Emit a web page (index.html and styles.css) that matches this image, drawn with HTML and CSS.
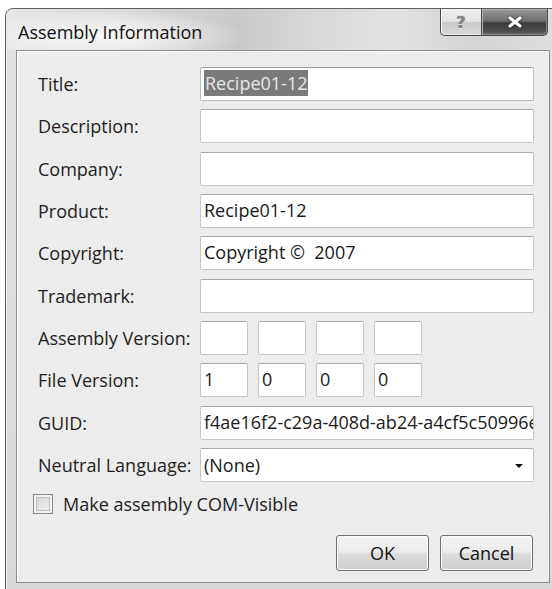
FILE: index.html
```html
<!DOCTYPE html>
<html lang="en">
<head>
<meta charset="utf-8">
<title>Assembly Information</title>
<link rel="stylesheet" href="styles.css">
</head>
<body>
<div class="window">
  <div class="titlebar">
    <span class="caption">Assembly Information</span>
    <div class="caption-buttons">
      <button class="cap-btn help" type="button">?</button>
      <button class="cap-btn close" type="button" aria-label="Close">
        <svg width="16" height="12" viewBox="0 0 16 12">
          <path d="M3 2 L13 10 M13 2 L3 10" stroke="#fff" stroke-width="3" stroke-linecap="round"/>
        </svg>
      </button>
    </div>
  </div>

  <div class="client">
    <div class="form">
      <label class="lbl">Title:</label>
      <div class="field first"><span class="sel">Recipe01-12</span></div>

      <label class="lbl">Description:</label>
      <div class="field"></div>

      <label class="lbl">Company:</label>
      <div class="field"></div>

      <label class="lbl">Product:</label>
      <div class="field">Recipe01-12</div>

      <label class="lbl">Copyright:</label>
      <div class="field">Copyright ©&nbsp; 2007</div>

      <label class="lbl">Trademark:</label>
      <div class="field"></div>

      <label class="lbl">Assembly Version:</label>
      <div class="version">
        <div class="field"></div><div class="field"></div><div class="field"></div><div class="field"></div>
      </div>

      <label class="lbl">File Version:</label>
      <div class="version">
        <div class="field">1</div><div class="field">0</div><div class="field">0</div><div class="field">0</div>
      </div>

      <label class="lbl">GUID:</label>
      <div class="field clip">f4ae16f2-c29a-408d-ab24-a4cf5c50996e</div>

      <label class="lbl">Neutral Language:</label>
      <div class="field combo"><span>(None)</span><span class="arrow"></span></div>
    </div>

    <label class="check"><span class="box"></span>Make assembly COM-Visible</label>

    <div class="actions">
      <button class="btn" type="button">OK</button>
      <button class="btn" type="button">Cancel</button>
    </div>
  </div>
</div>
</body>
</html>
```

FILE: styles.css
```css
html, body {
  margin: 0;
  padding: 0;
  background: #ffffff;
  overflow: hidden;
  width: 552px;
  height: 589px;
}

body {
  font-family: "Open Sans", "Noto Sans", sans-serif;
  color: #1e1e1e;
}

/* Window frame */
.window {
  margin: 8px 0 0 5px;
  width: 555px;
  height: 600px;
  border: 1px solid #5e5e5e;
  border-radius: 8px 8px 0 0;
  background: linear-gradient(180deg, #e2e2e2 0%, #d8d8d8 100%);
  box-sizing: border-box;
  box-shadow: inset 1px 1px 0 #f4f4f4;
}

.titlebar {
  height: 41px;
  display: flex;
  justify-content: space-between;
  align-items: flex-start;
  padding: 0 11px 0 12px;
  border-radius: 8px 8px 0 0;
  background:
    radial-gradient(ellipse 140px 26px at 100px 27px, rgba(250,250,250,0.95), rgba(250,250,250,0) 100%),
    linear-gradient(90deg, #e6e6e6 0%, #dcdcdc 20%, #c9c9c9 42%, #d8d8d8 55%, #e2e2e2 70%, #d4d4d4 85%, #dedede 100%);
}

.caption {
  font-size: 18px;
  color: #111;
  line-height: 1;
  margin-top: 14px;
}

.caption-buttons {
  display: flex;
}

.cap-btn {
  height: 27px;
  margin: 0;
  padding: 0;
  border: 1px solid #4a4a4a;
  border-top: none;
  display: flex;
  align-items: center;
  justify-content: center;
  font-family: "DejaVu Sans", sans-serif;
}

.help {
  width: 41px;
  border-radius: 0 0 0 5px;
  border-right: none;
  background: linear-gradient(180deg, #f0f0f0 0%, #e2e2e2 48%, #cacaca 52%, #d8d8d8 100%);
  box-shadow: inset 1px 0 0 #fafafa, inset 0 -1px 0 #efefef;
  color: #8a8a8a;
  font-size: 16px;
  font-weight: bold;
  text-shadow: 0 0 1px #444, 0 1px 0 #fff;
}

.close {
  width: 67px;
  border-radius: 0 0 5px 0;
  background: linear-gradient(180deg, #9a9a9a 0%, #6e6e6e 45%, #3c3c3c 55%, #4e4e4e 85%, #6a6a6a 100%);
  box-shadow: inset 1px 1px 0 #b0b0b0, inset -1px -1px 0 #8a8a8a;
}

.close svg {
  display: block;
  filter: drop-shadow(0 0 1px #222);
}

/* Client area */
.client {
  margin: 0 9px 0 10px;
  height: 533px;
  border: 1px solid #8c8c8c;
  box-shadow: inset 1px 1px 0 #ffffff;
  background: #ececec;
  box-sizing: border-box;
  padding: 16px 16px 0 16px;
  display: flex;
  flex-direction: column;
}

.form {
  display: grid;
  grid-template-columns: 167px 334px;
  grid-auto-rows: 34px;
  row-gap: 8.33px;
  align-items: center;
}

.lbl {
  font-size: 18px;
  color: #1e1e1e;
  padding-left: 5px;
  white-space: nowrap;
}

.field {
  height: 34px;
  box-sizing: border-box;
  background: #fff;
  border: 1px solid #c6c6c6;
  border-top-color: #a8a8a8;
  border-radius: 2px;
  font-size: 18px;
  line-height: 31px;
  padding: 0 3px;
  color: #1a1a1a;
  white-space: nowrap;
  overflow: hidden;
}

.field.first {
  border-color: #9a9a9a #bdbdbd #bdbdbd #bdbdbd;
}

.sel {
  background: #7a7a7a;
  color: #e6e6e6;
  display: inline-block;
  line-height: 26px;
  padding: 0 1px;
  margin-top: 2px;
  vertical-align: top;
}

.version {
  display: flex;
  gap: 10px;
}

.version .field {
  width: 48px;
}

.clip {
  text-overflow: clip;
  padding-right: 0;
}

.combo {
  display: flex;
  align-items: center;
  justify-content: space-between;
  line-height: 1;
  padding-right: 10px;
}

.arrow {
  width: 0;
  height: 0;
  border-left: 4px solid transparent;
  border-right: 4px solid transparent;
  border-top: 4px solid #111;
  margin-top: 3px;
}

/* Checkbox row */
.check {
  display: flex;
  align-items: center;
  gap: 10px;
  margin-top: 10px;
  font-size: 18px;
  color: #1e1e1e;
}

.box {
  width: 20px;
  height: 20px;
  box-sizing: border-box;
  border: 1px solid #8a8a8a;
  background: linear-gradient(135deg, #cfcfcf 0%, #e6e6e6 60%, #f6f6f6 100%);
  box-shadow: inset 0 0 0 2px #f2f2f2, inset 0 0 0 3px #bcbcbc;
}

/* Dialog buttons */
.actions {
  display: flex;
  justify-content: flex-end;
  gap: 11px;
  margin-top: 19px;
}

.btn {
  width: 93px;
  height: 36px;
  margin: 0;
  font-family: "Open Sans", "Noto Sans", sans-serif;
  font-size: 18px;
  color: #111;
  border: 1px solid #707070;
  border-radius: 3px;
  background: linear-gradient(180deg, #f4f4f4 0%, #ebebeb 48%, #dcdcdc 52%, #cfcfcf 100%);
  box-shadow: inset 0 0 0 1px #fbfbfb;
  padding: 0;
}
```
